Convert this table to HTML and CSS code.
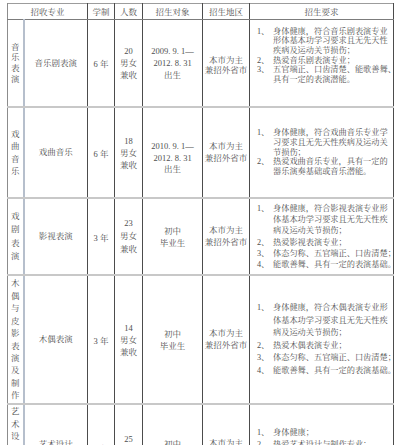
FILE: index.html
```html
<!DOCTYPE html>
<html lang="zh-CN">
<head>
<meta charset="utf-8">
<title>招生专业</title>
<link rel="stylesheet" href="styles.css">
</head>
<body>
<table class="t">
  <colgroup>
    <col class="c-a"><col class="c-b"><col class="c-c"><col class="c-d"><col class="c-e"><col class="c-f"><col class="c-g">
  </colgroup>
  <tr class="hd">
    <th colspan="2">招收专业</th>
    <th>学制</th>
    <th>人数</th>
    <th>招生对象</th>
    <th>招生地区</th>
    <th>招生要求</th>
  </tr>
  <tr class="r r1">
    <td class="cat">音乐表演</td>
    <td class="maj">音乐剧表演</td>
    <td>6 年</td>
    <td class="num">20<br>男女<br>兼收</td>
    <td class="obj">2009. 9. 1—<br>2012. 8. 31<br>出生</td>
    <td class="area">本市为主<br>兼招外省市</td>
    <td class="req">
      <div class="ln"><span class="n">1、</span>身体健康，符合音乐剧表演专业</div>
      <div class="ln ind">形体基本功学习要求且无先天性</div>
      <div class="ln ind">疾病及运动关节损伤；</div>
      <div class="ln"><span class="n">2、</span>热爱音乐剧表演专业；</div>
      <div class="ln"><span class="n">3、</span>五官端正、口齿清楚、能歌善舞、</div>
      <div class="ln ind">具有一定的表演潜能。</div>
    </td>
  </tr>
  <tr class="r r2">
    <td class="cat">戏曲音乐</td>
    <td class="maj">戏曲音乐</td>
    <td>6 年</td>
    <td class="num">18<br>男女<br>兼收</td>
    <td class="obj">2010. 9. 1—<br>2012. 8. 31<br>出生</td>
    <td class="area">本市为主<br>兼招外省市</td>
    <td class="req">
      <div class="ln"><span class="n">1、</span>身体健康，符合戏曲音乐专业学</div>
      <div class="ln ind">习要求且无先天性疾病及运动关</div>
      <div class="ln ind">节损伤；</div>
      <div class="ln"><span class="n">2、</span>热爱戏曲音乐专业，具有一定的</div>
      <div class="ln ind">器乐演奏基础或音乐潜能。</div>
    </td>
  </tr>
  <tr class="r r3">
    <td class="cat">戏剧表演</td>
    <td class="maj">影视表演</td>
    <td>3 年</td>
    <td class="num">23<br>男女<br>兼收</td>
    <td class="obj">初中<br>毕业生</td>
    <td class="area">本市为主<br>兼招外省市</td>
    <td class="req">
      <div class="ln"><span class="n">1、</span>身体健康，符合影视表演专业形</div>
      <div class="ln ind">体基本功学习要求且无先天性疾</div>
      <div class="ln ind">病及运动关节损伤；</div>
      <div class="ln"><span class="n">2、</span>热爱影视表演专业；</div>
      <div class="ln"><span class="n">3、</span>体态匀称、五官端正、口齿清楚；</div>
      <div class="ln"><span class="n">4、</span>能歌善舞、具有一定的表演基础。</div>
    </td>
  </tr>
  <tr class="r r4">
    <td class="cat">木偶与皮影表演及制作</td>
    <td class="maj">木偶表演</td>
    <td>3 年</td>
    <td class="num">14<br>男女<br>兼收</td>
    <td class="obj">初中<br>毕业生</td>
    <td class="area">本市为主<br>兼招外省市</td>
    <td class="req">
      <div class="ln"><span class="n">1、</span>身体健康，符合木偶表演专业形</div>
      <div class="ln ind">体基本功学习要求且无先天性疾</div>
      <div class="ln ind">病及运动关节损伤；</div>
      <div class="ln"><span class="n">2、</span>热爱木偶表演专业；</div>
      <div class="ln"><span class="n">3、</span>体态匀称、五官端正、口齿清楚；</div>
      <div class="ln"><span class="n">4、</span>能歌善舞、具有一定的表演基础。</div>
    </td>
  </tr>
  <tr class="r r5">
    <td class="cat">艺术设计与制作</td>
    <td class="maj">艺术设计</td>
    <td class="yr">3 年</td>
    <td class="num">25<br>男女<br>兼收</td>
    <td class="obj">初中<br>毕业生</td>
    <td class="area">本市为主<br>兼招外省市</td>
    <td class="req">
      <div class="ln"><span class="n">1、</span>身体健康；</div>
      <div class="ln"><span class="n">2、</span>热爱艺术设计与制作专业；</div>
    </td>
  </tr>
</table>
</body>
</html>
```
FILE: styles.css
```css
html, body {
  margin: 0;
  padding: 0;
  background: #ffffff;
}

body {
  font-family: "Liberation Serif", "Noto Serif CJK SC", "Noto Sans CJK SC", serif;
  color: #505050;
  overflow: hidden;
}

.t {
  border-collapse: collapse;
  table-layout: fixed;
  width: 386px;
  margin: 3px 0 0 7px;
  border-top: 1px solid #9c9c9c;
  border-left: 1px solid #8c8c8c;
  border-right: 1px solid #9c9c9c;
}

.c-a { width: 16px; }
.c-b { width: 64px; }
.c-c { width: 27px; }
.c-d { width: 28px; }
.c-e { width: 60px; }
.c-f { width: 47px; }
.c-g { width: 144px; }

th, td {
  padding: 0;
  font-size: 8.5px;
  font-weight: normal;
  text-align: center;
  vertical-align: middle;
  border-left: 1px solid #4c4c4c;
  border-right: 1px solid #4c4c4c;
}

.hd th {
  height: 15px;
  line-height: 10px;
  border-bottom: 1px solid #7c7c7c;
}

.hd th:first-child {
  border-left: 1px solid #8c8c8c;
}

.r td {
  border-bottom: 2px solid #c8c8c8;
}

.r td.cat {
  padding: 0 3px;
  border-left: 1px solid #8c8c8c;
  border-right: 2px solid #b6bfcc;
}

.maj { line-height: 11px; }
.num { line-height: 12px; }
.obj { line-height: 12px; }
.area { line-height: 11.5px; }

.req {
  text-align: left;
  padding-left: 7px;
  font-size: 8.2px;
}

.ln {
  white-space: nowrap;
}

.n {
  display: inline-block;
  width: 16px;
}

.ind {
  padding-left: 16px;
}

/* row 1 */
.r1 td { height: 71px; }
.r1 .cat { line-height: 10.7px; }
.r1 .area { line-height: 10px; padding-top: 3px; }
.r1 .req { line-height: 9.6px; padding-bottom: 15px; }

/* row 2 */
.r2 td { height: 77px; }
.r2 .cat { line-height: 12.2px; }
.r2 .obj { line-height: 11.7px; padding-top: 12px; }
.r2 .req { line-height: 9.7px; }

/* row 3 */
.r3 td { height: 75px; }
.r3 .cat { line-height: 13.3px; }
.r3 .num { line-height: 13.3px; }
.r3 .req { line-height: 11.3px; }

/* row 4 */
.r4 td { height: 127px; }
.r4 .cat { line-height: 12.4px; }
.r4 .req { line-height: 12.5px; }

/* row 5 */
.r5 td { vertical-align: top; }
.r5 .cat { line-height: 12.5px; padding-top: 0; }
.r5 .maj { line-height: 12px; padding-top: 33px; }
.r5 .yr { line-height: 12px; padding-top: 38px; }
.r5 .num { line-height: 12.3px; padding-top: 28px; }
.r5 .obj { line-height: 12px; padding-top: 33px; }
.r5 .area { line-height: 11.5px; padding-top: 33px; }
.r5 .req { line-height: 11.5px; padding-top: 22px; }
```
